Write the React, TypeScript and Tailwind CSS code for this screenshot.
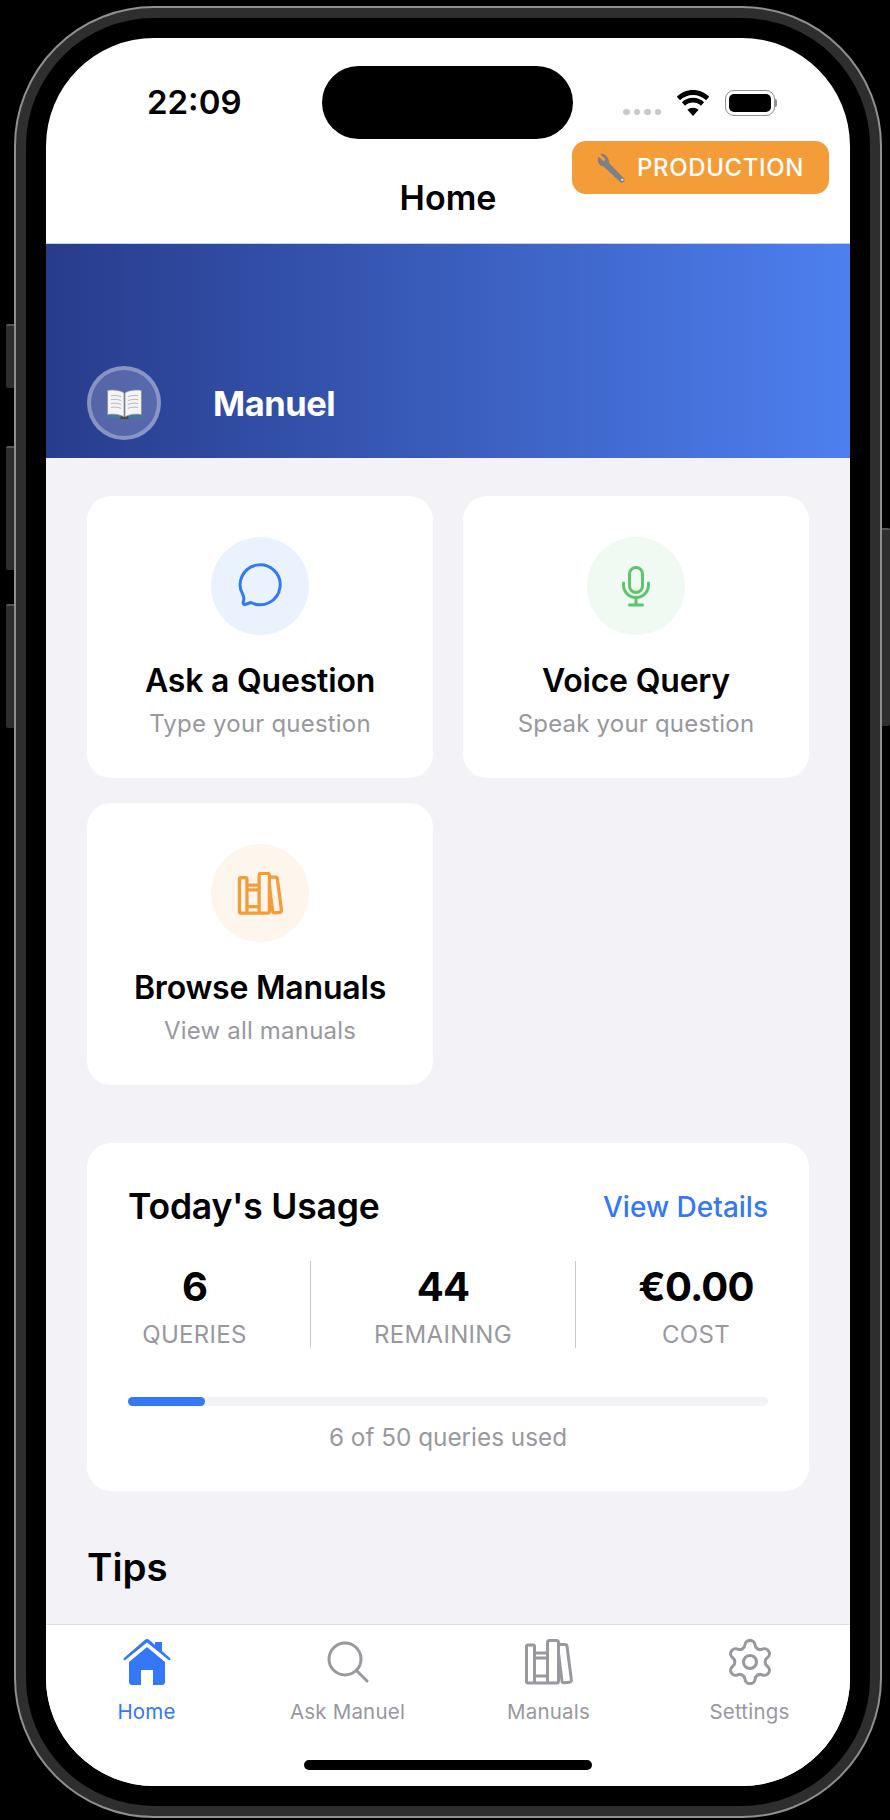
import { Settings } from "lucide-react";

const FONT = "font-['Inter','Noto_Sans',sans-serif]";

function BooksIcon({ className, strokeWidth = 3 }: { className?: string; strokeWidth?: number }) {
  return (
    <svg viewBox="0 0 48 46" fill="none" stroke="currentColor" strokeWidth={strokeWidth} strokeLinejoin="round" className={className}>
      <rect x="1.5" y="6" width="8" height="38" rx="1.5" />
      <path d="M9.5 14h13M9.5 19h13M9.5 37h13M9.5 44h13" />
      <rect x="22.5" y="1.5" width="11" height="42.5" rx="2" />
      <path d="M33.5 5.500h6.500a2 2 0 0 1 2 1.800l4.400 33.600a2 2 0 0 1-1.800 2.300l-5.400.6a2 2 0 0 1-2.200-1.700L33.500 14" />
    </svg>
  );
}

function ActionCard({ title, sub, circle, icon }: { title: string; sub: string; circle: string; icon: React.ReactNode }) {
  return (
    <div className="flex h-[282px] flex-col items-center rounded-[24px] bg-white pt-[41px]">
      <div className={`flex size-[98px] items-center justify-center rounded-full ${circle}`}>{icon}</div>
      <div className="mt-[26px] text-[32px] leading-[40px] font-semibold tracking-[-0.2px] text-black">{title}</div>
      <div className="mt-[7px] text-[24px] leading-[32px] tracking-[0.2px] text-[#98989e]">{sub}</div>
    </div>
  );
}

function Stat({ value, label, className }: { value: string; label: string; className: string }) {
  return (
    <div className={`flex flex-col items-center pt-[2px] ${className}`}>
      <div className="text-[40px] leading-[48px] font-bold tracking-[-0.8px] text-black">{value}</div>
      <div className="mt-[10px] text-[24px] leading-[28px] tracking-[0.3px] text-[#98989e]">{label}</div>
    </div>
  );
}

function Tab({ label, active, icon }: { label: string; active?: boolean; icon: React.ReactNode }) {
  return (
    <div className={`flex flex-1 flex-col items-center ${active ? "text-[#3478f6]" : "text-[#98989e]"}`}>
      <div className="flex h-[50px] items-center justify-center">{icon}</div>
      <div className="mt-[12px] text-[20.5px] leading-[26px] tracking-[0.2px]">{label}</div>
    </div>
  );
}

export default function App() {
  return (
    <div className={`relative h-[1820px] w-[890px] overflow-hidden bg-black pt-[6px] pl-[14px] ${FONT}`}>
      {/* side buttons */}
      <div className="absolute top-[324px] left-[6px] h-[64px] w-[8px] rounded-l-[2px] border-t-2 border-[#555] bg-[#2e2e2e]" />
      <div className="absolute top-[446px] left-[6px] h-[124px] w-[8px] rounded-l-[2px] border-t-2 border-[#555] bg-[#2e2e2e]" />
      <div className="absolute top-[604px] left-[6px] h-[124px] w-[8px] rounded-l-[2px] border-t-2 border-[#555] bg-[#2e2e2e]" />
      <div className="absolute top-[528px] right-[0px] h-[198px] w-[8px] rounded-r-[2px] border-t-2 border-[#555] bg-[#2e2e2e]" />

      <div className="h-[1812px] w-[868px] rounded-[140px] border-2 border-[#8f8f8f] bg-[#2e2e2e] p-[10px]">
        <div className="h-full w-full rounded-[128px] bg-black p-[20px]">
          <div className="relative flex h-full w-full flex-col overflow-hidden rounded-[108px] bg-white">
            {/* island + badge */}
            <div className="absolute top-[28px] left-[276px] h-[73px] w-[251px] rounded-[37px] bg-black" />
            <div className="absolute top-[103px] right-[21px] flex h-[53px] w-[257px] items-center justify-center gap-[10px] rounded-[14px] bg-[#f39c38]">
              <svg viewBox="3 2.5 26.500 28.500" className="size-[30px]">
                <path d="M5 3.500 10 8.500 8.500 10.500 3.500 6c-2 4 .5 9 5 9.500l16 15c1.500 1 4.500-.5 3.500-3.500L13.500 12C14 7 9 2 5 3.500Z" fill="#7d8186" />
                <circle cx="26" cy="28" r="1.200" fill="#d9d9d9" />
              </svg>
              <span className="text-[24px] leading-none font-medium tracking-[0.6px] text-white">PRODUCTION</span>
            </div>

            {/* status bar */}
            <div className="flex h-[130px] items-center pr-[73px] pl-[101px]">
              <span className="text-[33px] font-semibold text-black">22:09</span>
              <div className="ml-auto flex items-center">
                <div className="mt-[18px] flex gap-[4px]">
                  <span className="size-[6.5px] rounded-full bg-[#c9c9c9]" />
                  <span className="size-[6.5px] rounded-full bg-[#c9c9c9]" />
                  <span className="size-[6.5px] rounded-full bg-[#c9c9c9]" />
                  <span className="size-[6.5px] rounded-full bg-[#c9c9c9]" />
                </div>
                <svg viewBox="0 0 34 26" className="ml-[15px] h-[26px] w-[34px]">
                  <path d="M17 5c5 0 9.600 2 13 5.300l3.200-3.500C29 2.600 23.300 0 17 0S5 2.600.8 6.800L4 10.300C7.400 7 12 5 17 5Z" />
                  <path d="M17 12.500c3 0 5.800 1.200 7.900 3.200l3.200-3.500C25.200 9.400 21.300 7.700 17 7.700s-8.200 1.700-11.100 4.500l3.200 3.500c2.100-2 4.900-3.200 7.900-3.200Z" />
                  <path d="M17 26l5.600-6.200c-1.500-1.300-3.500-2.100-5.600-2.100s-4.100.8-5.600 2.100Z" />
                </svg>
                <div className="ml-[15px] flex items-center">
                  <div className="h-[26px] w-[50px] rounded-[9px] border-[1.5px] border-[#8e8e93] p-[3px]">
                    <div className="h-full w-full rounded-[5px] bg-black" />
                  </div>
                  <div className="h-[8px] w-[2px] rounded-r-full bg-[#8e8e93]" />
                </div>
              </div>
            </div>

            {/* nav title */}
            <div className="flex h-[76px] items-start justify-center border-b border-[#c8d0e8]">
              <span className="text-[34px] leading-[60px] font-semibold text-black">Home</span>
            </div>

            {/* hero */}
            <div className="flex h-[214px] items-end bg-gradient-to-r from-[#283c8c] to-[#4d80ef] pb-[18px] pl-[41px]">
              <div className="flex size-[74px] items-center justify-center rounded-full border-[4px] border-white/30 bg-white/20">
                <svg viewBox="0 0 40 32" className="h-[31px] w-[39px]">
                  <path d="M1 28h38v2.500H1z" fill="#3b7f96" />
                  <path d="M16 29h8v3h-8z" fill="#4a4a32" />
                  <path d="M19.500 5C15 2 8 1.500 2.500 2.500v25c6-1 12.500-.5 17 2.500Z" fill="#f4f4f4" stroke="#8d8d8d" strokeWidth=".8" />
                  <path d="M20.500 5C25 2 32 1.500 37.500 2.500v25c-6-1-12.500-.5-17 2.500Z" fill="#f4f4f4" stroke="#8d8d8d" strokeWidth=".8" />
                  <path d="M6 8c4-.6 7.500-.2 10.500 1M6 12c4-.6 7.500-.2 10.500 1M6 16c4-.6 7.500-.2 10.500 1M6 20c4-.6 7.500-.2 10.500 1M34 8c-4-.6-7.500-.2-10.500 1M34 12c-4-.6-7.500-.2-10.500 1M34 16c-4-.6-7.500-.2-10.500 1M34 20c-4-.6-7.500-.2-10.500 1" stroke="#b5b5b5" strokeWidth="1" fill="none" />
                </svg>
              </div>
              <span className="mb-[14px] ml-[52px] text-[34.500px] leading-[44px] font-bold tracking-[-0.5px] text-white">Manuel</span>
            </div>

            {/* scrolling content */}
            <div className="flex-1 overflow-hidden bg-[#f2f2f7] px-[41px] pt-[38px]">
              <div className="grid grid-cols-2 gap-x-[30px] gap-y-[25px]">
                <ActionCard
                  title="Ask a Question"
                  sub="Type your question"
                  circle="bg-[#eaf3fd]"
                  icon={
                    <svg viewBox="1 0 46 46" fill="none" stroke="#3478f6" strokeWidth="3" strokeLinejoin="round" className="size-[46px]">
                      <path d="M15 39.500A20 20 0 1 0 7 32c1 2 1.200 3.500.5 6-.6 2-.5 4 1.500 3.500Z" />
                    </svg>
                  }
                />
                <ActionCard
                  title="Voice Query"
                  sub="Speak your question"
                  circle="bg-[#f0f9f2]"
                  icon={
                    <svg viewBox="0 0 28 41" fill="none" stroke="#5ec46e" strokeWidth="3" strokeLinecap="round" className="h-[41px] w-[28px]">
                      <rect x="7.500" y="1.500" width="13" height="25" rx="6.500" />
                      <path d="M1.500 17v2a12.500 12.500 0 0 0 25 0v-2" />
                      <path d="M14 32v7M7.500 39h13" />
                    </svg>
                  }
                />
                <ActionCard
                  title="Browse Manuals"
                  sub="View all manuals"
                  circle="bg-[#fef6ec]"
                  icon={<BooksIcon strokeWidth={3.5} className="h-[43px] w-[47px] text-[#f39c38]" />}
                />
              </div>

              {/* usage */}
              <div className="mt-[58px] h-[348px] rounded-[24px] bg-white px-[41px] pt-[44px]">
                <div className="flex items-center justify-between">
                  <span className="text-[35.500px] leading-[40px] font-semibold tracking-[-0.2px] text-black">Today's Usage</span>
                  <span className="text-[28px] leading-[40px] font-medium text-[#3478f6]">View Details</span>
                </div>
                <div className="mt-[34px] flex h-[87px]">
                  <Stat value="6" label="QUERIES" className="w-[183px] border-r border-[#c7c7cc] pr-[49px]" />
                  <Stat value="44" label="REMAINING" className="w-[265px] border-r border-[#c7c7cc]" />
                  <Stat value="€0.00" label="COST" className="flex-1 pl-[48px]" />
                </div>
                <div className="mt-[49px] h-[9px] rounded-full bg-[#f2f2f7]">
                  <div className="h-full w-[12%] rounded-full bg-[#3478f6]" />
                </div>
                <div className="mt-[16px] text-center text-[24.300px] leading-[30px] text-[#98989e]">6 of 50 queries used</div>
              </div>

              <div className="mt-[54px] text-[38.500px] leading-[44px] font-semibold text-black">Tips</div>
            </div>

            {/* tab bar */}
            <div className="relative h-[162px] border-t border-[#dcdcdc] bg-white pt-[12px]">
              <div className="flex">
                <Tab
                  active
                  label="Home"
                  icon={
                    <svg viewBox="0 0 48 46" className="h-[46px] w-[48px]" fill="currentColor">
                      <path d="M24 0c.7 0 1.400.3 2 .8l6 5.200V3h7v9l8 7c1 1 .3 2.500-1 2.300L24 3.500 2 21.300C.7 21.500 0 20 1 19L22 .8c.6-.5 1.300-.8 2-.8Z" />
                      <path d="M24 8 6 23v20c0 1.700 1.300 3 3 3h9V31h12v15h9c1.700 0 3-1.300 3-3V23Z" />
                    </svg>
                  }
                />
                <Tab
                  label="Ask Manuel"
                  icon={
                    <svg viewBox="0 0 42 42" fill="none" stroke="currentColor" strokeWidth="3" strokeLinecap="round" className="size-[42px]">
                      <circle cx="18" cy="18" r="16" />
                      <path d="M30 30l10 10" />
                    </svg>
                  }
                />
                <Tab label="Manuals" icon={<BooksIcon className="h-[46px] w-[48px]" />} />
                <Tab label="Settings" icon={<Settings size={52} strokeWidth={1.4} />} />
              </div>
              <div className="absolute bottom-[16px] left-[258px] h-[10px] w-[288px] rounded-full bg-black" />
            </div>
          </div>
        </div>
      </div>
    </div>
  );
}
